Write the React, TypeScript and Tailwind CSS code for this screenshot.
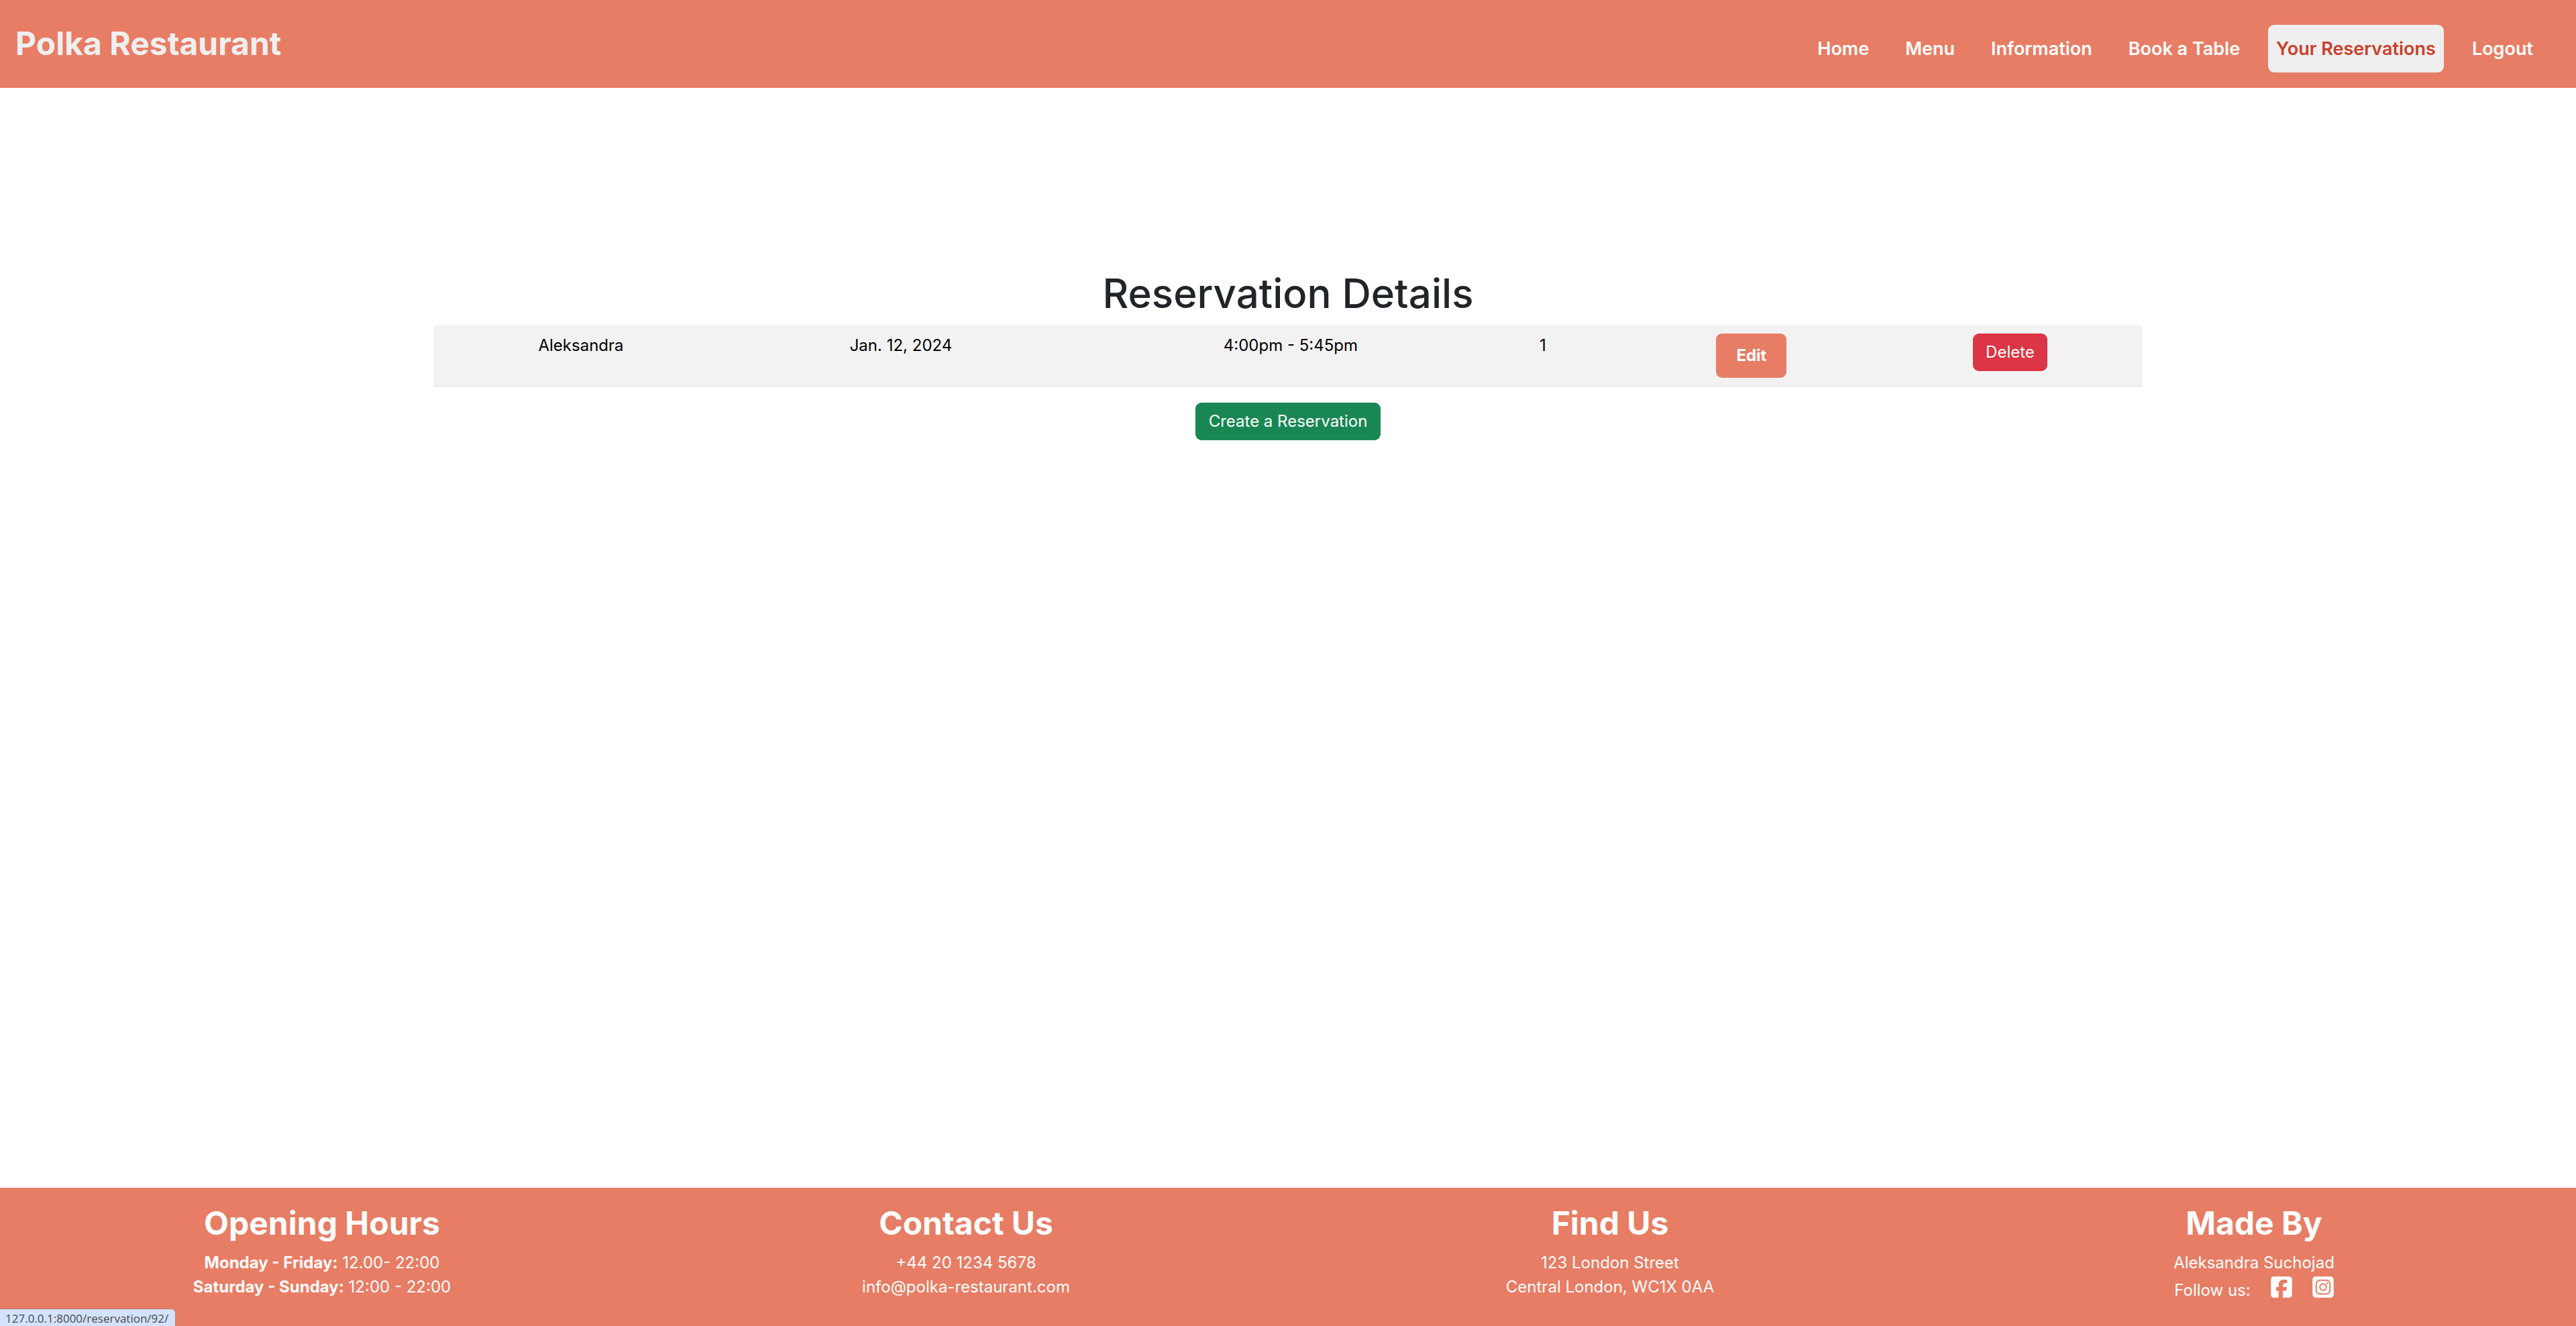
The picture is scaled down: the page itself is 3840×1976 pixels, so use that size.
import { FaSquareFacebook, FaSquareInstagram } from "react-icons/fa6";
import type { ReactNode } from "react";

const navItems = [
  { label: "Home", active: false },
  { label: "Menu", active: false },
  { label: "Information", active: false },
  { label: "Book a Table", active: false },
  { label: "Your Reservations", active: true },
  { label: "Logout", active: false },
];

function FooterColumn({ title, children }: { title: string; children: ReactNode }) {
  return (
    <section className="flex flex-col items-center text-center">
      <h2 className="mb-3 text-[48px] leading-[58px] font-bold">{title}</h2>
      {children}
    </section>
  );
}

export default function App() {
  return (
    <div className="flex min-h-screen flex-col bg-white font-['Inter',sans-serif] text-2xl leading-9 text-[#212529]">
      <header className="flex items-start justify-between bg-[#e77d65] pr-[52px] pb-[23px] pl-[23px]">
        <a href="#" className="mt-9 text-[48px] leading-[58px] font-bold text-[#efefef]">
          Polka Restaurant
        </a>
        <nav className="mt-[37px] flex gap-[30px]">
          {navItems.map((item) => (
            <a
              key={item.label}
              href="#"
              className={
                item.active
                  ? "rounded-[9px] bg-[#efefef] px-3 py-[15px] text-[27px] leading-[41px] font-semibold text-[#cb3e2a]"
                  : "rounded-[9px] px-3 py-[15px] text-[27px] leading-[41px] font-semibold text-white"
              }
            >
              {item.label}
            </a>
          ))}
        </nav>
      </header>

      <main className="flex flex-1 flex-col items-center pt-[270px]">
        <h1 className="mb-3 text-6xl leading-[72px] font-medium">Reservation Details</h1>
        <div className="mb-6 w-2/3 px-[6px]">
          <table className="w-full border-b border-[#dee2e6] bg-[#f2f2f2] text-center text-black">
            <tbody>
              <tr className="align-top">
                <td className="w-[440px] p-3">Aleksandra</td>
                <td className="w-[514px] p-3">Jan. 12, 2024</td>
                <td className="w-[648px] p-3">4:00pm - 5:45pm</td>
                <td className="w-[104px] p-3">1</td>
                <td className="w-[71px] p-3"></td>
                <td className="w-[376px] p-3">
                  <button className="mx-auto block rounded-[9px] bg-[#e77d65] px-[30px] py-[15px] font-bold text-white">
                    Edit
                  </button>
                </td>
                <td className="w-[395px] p-3">
                  <button className="mx-auto block rounded-[9px] bg-[#dc3545] px-[19px] py-[10px] text-white">
                    Delete
                  </button>
                </td>
              </tr>
            </tbody>
          </table>
        </div>
        <button className="rounded-[9px] bg-[#198754] px-5 py-[10px] text-white">
          Create a Reservation
        </button>
      </main>

      <footer className="grid grid-cols-4 bg-[#e77d65] pt-6 pb-[35px] text-white">
        <FooterColumn title="Opening Hours">
          <p>
            <strong className="font-bold">Monday - Friday:</strong> 12.00- 22:00
          </p>
          <p>
            <strong className="font-bold">Saturday - Sunday:</strong> 12:00 - 22:00
          </p>
        </FooterColumn>
        <FooterColumn title="Contact Us">
          <p>+44 20 1234 5678</p>
          <p>info@polka-restaurant.com</p>
        </FooterColumn>
        <FooterColumn title="Find Us">
          <p>123 London Street</p>
          <p>Central London, WC1X 0AA</p>
        </FooterColumn>
        <FooterColumn title="Made By">
          <p>Aleksandra Suchojad</p>
          <div className="flex items-end gap-[30px]">
            <span className="pt-[5px]">Follow us:</span>
            <a href="#" aria-label="Facebook" className="flex h-[41px] items-center justify-center pb-[5px]">
              <FaSquareFacebook className="h-9 w-8" />
            </a>
            <a href="#" aria-label="Instagram" className="flex h-[41px] items-center justify-center pb-[5px]">
              <FaSquareInstagram className="h-9 w-8" />
            </a>
          </div>
        </FooterColumn>
      </footer>

      <div className="fixed bottom-0 left-0 rounded-tr-md border-t border-r border-[#c9776f] bg-[#d3e3fd] pt-[2px] pr-[10px] pl-2 font-['Open_Sans',sans-serif] text-[17px] leading-[23px] text-[#474747]">
        127.0.0.1:8000/reservation/92/
      </div>
    </div>
  );
}
